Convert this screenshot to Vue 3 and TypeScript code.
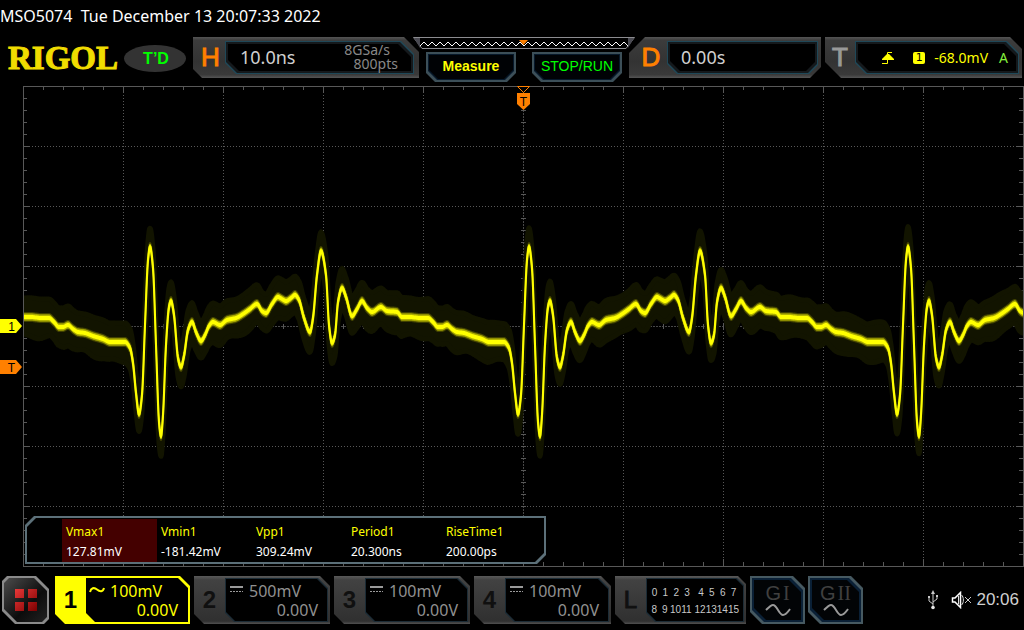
<script setup lang="ts">
interface Measurement {
  label: string
  value: string
}

const measurements: Measurement[] = [
  { label: 'Vmax1', value: '127.81mV' },
  { label: 'Vmin1', value: '-181.42mV' },
  { label: 'Vpp1', value: '309.24mV' },
  { label: 'Period1', value: '20.300ns' },
  { label: 'RiseTime1', value: '200.00ps' },
]

const channels = [
  { id: 1, scale: '100mV', offset: '0.00V', active: true },
  { id: 2, scale: '500mV', offset: '0.00V', active: false },
  { id: 3, scale: '100mV', offset: '0.00V', active: false },
  { id: 4, scale: '100mV', offset: '0.00V', active: false },
]

const digitalRows = [
  [0, 1, 2, 3, 4, 5, 6, 7],
  [8, 9, 10, 11, 12, 13, 14, 15],
]

const generators = ['I', 'II']

// Plot geometry: 10 x 8 divisions
const left = 23
const right = 1023
const top = 86
const bottom = 566
const midX = 523
const midY = 326

const verticals = [123, 223, 323, 423, 623, 723, 823, 923]
const horizontals = [146, 206, 266, 386, 446, 506]

function buildTicks(): string {
  let d = ''
  for (let x = left + 20; x < right; x += 20) {
    const len = (x - left) % 100 === 0 ? 7 : 4
    d += `M${x + 0.5} ${top}v${len}M${x + 0.5} ${bottom}v${-len}M${x + 0.5} ${midY - 2}v5`
  }
  for (let y = top + 12; y < bottom; y += 12) {
    const len = (y - top) % 60 === 0 ? 7 : 4
    d += `M${left} ${y + 0.5}h${len}M${right} ${y + 0.5}h${-len}M${midX - 2} ${y + 0.5}h5`
  }
  return d
}
const ticks = buildTicks()

// One period of the signal, repeated across the screen
const period = 379
const shape: [number, number][] = [
  [23, 317], [31, 317], [41, 318], [49, 318], [54, 322], [59, 327], [63, 327], [68, 325],
  [73, 329], [78, 332], [85, 333], [93, 336], [103, 339], [110, 342], [118, 342], [125, 342],
  [130, 348], [133, 363], [136, 393], [139, 414], [142, 395], [145, 325], [148, 260], [150, 247],
  [153, 268], [156, 345], [159, 422], [161, 436], [163, 415], [166, 345], [169, 307], [171, 301],
  [174, 315], [178, 358], [181, 367], [184, 356], [188, 330], [192, 322], [196, 332], [201, 341],
  [205, 335], [209, 326], [213, 322], [220, 325], [227, 320], [236, 318], [243, 314], [250, 309],
  [257, 304], [262, 311], [266, 313], [272, 304], [278, 297], [282, 299], [286, 301], [291, 298],
  [295, 295], [299, 300], [304, 318], [310, 332], [313, 318], [317, 275], [321, 251], [326, 275],
  [329, 325], [332, 343], [335, 335], [338, 302], [342, 288], [346, 297], [352, 316], [357, 309],
  [362, 301], [367, 308], [372, 312], [381, 307], [387, 311], [397, 312],
]

const points: [number, number][] = []
for (let k = -1; k < 3; k++) {
  for (const [x, y] of shape) points.push([x + k * period, y])
}

// Monotone cubic interpolation keeps each crest and trough where it is given
const slopes = points.map((p, i) => {
  const a = points[i - 1]
  const b = points[i + 1]
  if (!a || !b) return 0
  const s0 = (p[1] - a[1]) / (p[0] - a[0])
  const s1 = (b[1] - p[1]) / (b[0] - p[0])
  return s0 * s1 <= 0 ? 0 : (2 * s0 * s1) / (s0 + s1)
})

const samples: [number, number][] = []
let seg = 0
for (let x = left; x <= right; x += 0.5) {
  while (seg < points.length - 2 && points[seg + 1][0] < x) seg++
  const [x0, y0] = points[seg]
  const [x1, y1] = points[seg + 1]
  const h = x1 - x0
  const t = (x - x0) / h
  const t2 = t * t
  const t3 = t2 * t
  const y =
    (2 * t3 - 3 * t2 + 1) * y0 +
    (t3 - 2 * t2 + t) * h * slopes[seg] +
    (3 * t2 - 2 * t3) * y1 +
    (t3 - t2) * h * slopes[seg + 1]
  samples.push([x, y])
}

function band(spread: number, noise: number): string {
  const edge = (sign: number) =>
    samples.map(([x, y]) => {
      const n = noise * (Math.sin(Math.floor(x / 2) * 12.9898 * sign) + Math.sin(x * 0.21))
      return `${x} ${(y + sign * (spread + n)).toFixed(1)}`
    })
  return `M${edge(-1).join('L')}L${edge(1).reverse().join('L')}Z`
}

const halo = band(19, 1)
const glow = band(4, 0)
const body = band(3, 0)
const core = band(1, 0)

let zig = 'M0 9'
for (let x = 0; x < 208; x += 8) zig += `L${x + 4} 5L${x + 8} 9`
</script>

<template>
  <main class="scope">
    <p class="title">MSO5074&nbsp; Tue December 13 20:07:33 2022</p>

    <header class="top">
      <div class="brand">
        <span class="logo">RIGOL</span>
        <span class="status">T’D</span>
      </div>

      <section class="panel horizontal cut">
        <span class="letter orange">H</span>
        <div class="well cut">
          <span class="big">10.0ns</span>
          <span class="rate"><span class="rate-a">8GSa/s</span><span>800pts</span></span>
        </div>
      </section>

      <div class="middle">
        <svg class="memory" viewBox="0 0 222 12" preserveAspectRatio="none" aria-hidden="true">
          <path d="M.5 .5H221.5L213 11.500H9Z" fill="#000" stroke="#8c8c90" />
          <path d="M1 1H7V11Z" fill="#4a4a52" />
          <path d="M221 1H215V11Z" fill="#4a4a52" />
          <path :d="zig" transform="translate(7 0)" fill="none" stroke="#fff" />
          <path d="M106 3H115L110.500 8Z" fill="#ff8000" />
        </svg>
        <div class="keys">
          <button type="button" class="key cut measure">Measure</button>
          <button type="button" class="key cut run">STOP/RUN</button>
        </div>
      </div>

      <section class="panel delay cut">
        <span class="letter orange">D</span>
        <div class="well cut"><span class="big">0.00s</span></div>
      </section>

      <section class="panel trigger cut">
        <span class="letter grey">T</span>
        <div class="well cut">
          <svg class="edge" width="12" height="14" viewBox="0 0 12 14" aria-hidden="true">
            <path d="M0 12.500H5.500V1.500H10" fill="none" stroke="#ff0" />
            <path d="M5 3H7L12 8V9H0V8Z" fill="#ff0" />
          </svg>
          <span class="source">1</span>
          <span class="level">-68.0mV</span>
          <span class="mode">A</span>
        </div>
      </section>
    </header>

    <section class="plot">
      <svg class="graph" viewBox="0 84 1024 486" role="img" aria-label="Waveform">
        <g fill="none" stroke="#585858" stroke-width="1">
          <rect x="23.500" y="86.500" width="1000" height="480" />
          <g stroke-dasharray="1 2">
            <path v-for="x in verticals" :key="'v' + x" :d="`M${x + 0.5} ${top}V${bottom}`" />
            <path v-for="y in horizontals" :key="'h' + y" :d="`M${left} ${y + 0.5}H${right}`" />
          </g>
          <g stroke-dasharray="2 1" stroke="#484848">
            <path :d="`M${midX + 0.5} ${top}V${bottom}`" />
            <path :d="`M${left} ${midY + 0.5}H${right}`" />
          </g>
          <path :d="ticks" />
        </g>

        <clipPath id="screen"><rect x="24" y="87" width="999" height="479" /></clipPath>
        <g clip-path="url(#screen)" stroke-linejoin="round">
          <path :d="halo" fill="#121400" stroke="#121400" stroke-width="5" />
          <path :d="glow" fill="#6e6e00" stroke="#6e6e00" stroke-width="2" stroke-opacity=".5" />
          <path :d="body" fill="#b4b400" stroke="#b4b400" stroke-width="1" />
          <path :d="core" fill="#ff0" stroke="#ff0" stroke-width="2" />
        </g>

        <path d="M517.500 86.500H529.500L523.500 92.500Z" fill="#000" stroke="#ff8000" />
        <path d="M517 93H530V104L523.500 110L517 104Z" fill="#ff8000" />
        <path d="M0 319H16L22 326L16 333H0Z" fill="#ff0" />
        <path d="M0 360H16L22 367L16 374H0Z" fill="#ff8000" />
        <g class="tag" text-anchor="middle">
          <text x="523.500" y="106">T</text>
          <text x="11.500" y="331">1</text>
          <text x="11.500" y="372">T</text>
        </g>
      </svg>

      <div class="results cut">
        <table>
          <thead>
            <tr>
              <th v-for="m in measurements" :key="m.label" scope="col">{{ m.label }}</th>
            </tr>
          </thead>
          <tbody>
            <tr>
              <td v-for="m in measurements" :key="m.label">{{ m.value }}</td>
            </tr>
          </tbody>
        </table>
      </div>
    </section>

    <footer class="bottom">
      <button type="button" class="menu cut" aria-label="Menu">
        <svg width="24" height="24" viewBox="0 0 24 24" aria-hidden="true">
          <defs>
            <linearGradient id="red" x1="0" y1="0" x2="1" y2="1">
              <stop offset="0" stop-color="#e83838" />
              <stop offset="1" stop-color="#7c0000" />
            </linearGradient>
          </defs>
          <path d="M1 1H10V10H1ZM14 1H23V10H14ZM1 14H10V23H1ZM14 14H23V23H14Z" fill="url(#red)" />
        </svg>
      </button>

      <button
        v-for="c in channels"
        :key="c.id"
        type="button"
        class="channel cut"
        :class="{ active: c.active }"
      >
        <span class="number">{{ c.id }}</span>
        <span class="inset cut">
          <span class="scale">
            <svg v-if="c.active" width="16" height="16" viewBox="0 0 16 16" aria-hidden="true">
              <path
                d="M1 8C2 4 5 3 8 5.500S14 8 15 4"
                fill="none"
                stroke="#ff0"
                stroke-width="2"
              />
            </svg>
            <svg v-else width="16" height="16" viewBox="0 0 16 16" aria-hidden="true">
              <path d="M2 3H15" stroke="#9a9a9a" stroke-width="2" />
              <path d="M2 7.500H15" stroke="#9a9a9a" stroke-dasharray="2 1" />
            </svg>
            <span>{{ c.scale }}</span>
          </span>
          <span class="offset">{{ c.offset }}</span>
        </span>
      </button>

      <button type="button" class="channel digital cut">
        <span class="number thin">L</span>
        <span class="inset cut">
          <span v-for="(row, i) in digitalRows" :key="i" class="bits">
            <span v-for="n in row" :key="n">{{ n }}</span>
          </span>
        </span>
      </button>

      <button v-for="g in generators" :key="g" type="button" class="gen cut">
        <span class="gen-name">G<span class="roman">{{ g }}</span></span>
        <svg width="26" height="14" viewBox="0 0 26 14" aria-hidden="true">
          <path
            d="M1 7C4 4 6 2 8 2C12 2 14 12 18 12C21 12 22 10 25 6"
            fill="none"
            stroke="#999"
            stroke-width="2"
          />
        </svg>
      </button>

      <div class="tray">
        <svg width="12" height="20" viewBox="0 0 12 20" aria-label="USB" role="img">
          <path d="M6 2V17M6 14L2 11V7M6 12L10 9V6" fill="none" stroke="#c8c8c8" />
          <path d="M6 0L8 4H4Z" fill="#c8c8c8" />
          <rect x="1" y="6" width="2" height="2" fill="#c8c8c8" />
          <rect x="9" y="5" width="2" height="2" fill="#c8c8c8" />
          <circle cx="6" cy="17.500" r="1.800" fill="#e8e8e8" />
        </svg>
        <svg width="21" height="18" viewBox="0 0 21 18" aria-label="Muted" role="img">
          <path
            d="M1.500 7V11H4L9.500 16.500V1.500L4 7Z"
            fill="none"
            stroke="#fff"
            stroke-width="1.500"
          />
          <path d="M7.500 5V13M10.500 4C13 6 13 12 10.500 14" fill="none" stroke="#ddd" />
          <path d="M14 6L20 12M20 6L14 12" fill="none" stroke="#ccc" />
        </svg>
        <time>20:06</time>
      </div>
    </footer>
  </main>
</template>

<style>
body {
  background: #000;
}
</style>

<style scoped>
.scope {
  display: flex;
  flex-direction: column;
  background: #000;
  color: #d0d0d0;
  font-family: 'Noto Sans', 'Open Sans', sans-serif;
  overflow: hidden;
}

.scope button {
  border: 0;
  padding: 0;
  font: inherit;
  color: inherit;
  cursor: pointer;
}

/* Rectangle with any of its four corners cut off */
.cut,
.well::before,
.well::after,
.key::before,
.key::after,
.gen::before,
.gen::after,
.menu::before,
.results::before,
.inset::before {
  clip-path: polygon(
    var(--tl) 0,
    calc(100% - var(--tr)) 0,
    100% var(--tr),
    100% calc(100% - var(--br)),
    calc(100% - var(--br)) 100%,
    var(--bl) 100%,
    0 calc(100% - var(--bl)),
    0 var(--tl)
  );
}

.cut {
  --tl: 0px;
  --tr: 0px;
  --br: 0px;
  --bl: 0px;
  position: relative;
  isolation: isolate;
}

.well::before,
.well::after,
.key::before,
.key::after,
.gen::before,
.gen::after,
.menu::before,
.results::before,
.inset::before {
  content: '';
  position: absolute;
  inset: 1px;
  z-index: -1;
}

.title {
  margin: 0;
  height: 37px;
  line-height: 32px;
  font-size: 16px;
  color: #fff;
  white-space: nowrap;
}

.top {
  display: grid;
  grid-template-columns: 193fr 220fr 216fr 194fr 201fr;
  height: 47px;
}

.brand {
  display: flex;
  align-items: center;
  justify-content: space-between;
  height: 42px;
  padding: 0 7px 0 8px;
}

.logo {
  font: bold 33px/42px 'Liberation Serif', serif;
  color: #f0dc00;
  -webkit-text-stroke: 1px #f0dc00;
}

.status {
  width: 60px;
  padding-left: 2px;
  border-radius: 50%;
  background: #333;
  color: #0f0;
  font: bold 16px/27px 'Liberation Sans', sans-serif;
  text-align: center;
}

.panel {
  display: grid;
  height: 41px;
  box-sizing: border-box;
  background: linear-gradient(#555 0, #3c3c3c 8%, #333 60%, #3a3a3a 92%, #555);
}

.horizontal {
  --tr: 15px;
  --bl: 9px;
  grid-template-columns: 32px 1fr;
  margin-right: -6px;
  padding: 4px 5px 4px 0;
}

.delay {
  --tl: 16px;
  --br: 11px;
  grid-template-columns: 38px 1fr;
  margin-right: 2px;
  padding: 4px 3px 4px 0;
}

.trigger {
  --tr: 12px;
  --bl: 16px;
  grid-template-columns: 30px 1fr;
  margin: 0 2px;
  padding: 4px 3px 4px 0;
}

.letter {
  font: 26px/33px 'Liberation Sans', sans-serif;
  text-align: center;
}

.orange {
  color: #ff8000;
  -webkit-text-stroke: 1px #ff8000;
}

.horizontal .letter {
  padding-left: 3px;
}

.delay .letter {
  padding-left: 6px;
}

.grey {
  color: #999;
  -webkit-text-stroke: 1px #999;
}

.well {
  display: flex;
  align-items: center;
  background: #1f4858;
}

.well::before {
  background: #15191c;
}

.well::after {
  inset: 3px;
  background: #000;
}

.horizontal .well {
  --tr: 13px;
  --bl: 11px;
  justify-content: space-between;
  padding: 0 16px 0 15px;
}

.delay .well {
  --br: 9px;
  --bl: 10px;
  padding: 0 14px;
}

.trigger .well {
  --tr: 12px;
  --bl: 11px;
  justify-content: flex-end;
  padding-right: 11px;
  font-size: 14px;
}

.big {
  font-size: 18px;
  line-height: 33px;
}

.rate {
  display: flex;
  flex-direction: column;
  align-items: flex-end;
  padding-bottom: 2px;
  font-size: 14px;
  line-height: 14px;
  color: #888;
}

.rate-a {
  padding-right: 8px;
}

.edge {
  margin-right: 19px;
}

.source {
  width: 12px;
  border-radius: 2px;
  margin-right: 9px;
  background: #ff0;
  color: #000;
  font: 11px/12px 'DejaVu Sans', sans-serif;
  text-align: center;
}

.level {
  margin-right: 11px;
  color: #ff0;
}

.mode {
  color: #84f03c;
}

.middle {
  display: flex;
  flex-direction: column;
  margin-right: -6px;
}

.memory {
  display: block;
  width: 100%;
  height: 12px;
}

.keys {
  display: flex;
  gap: 16px;
  padding: 3px 13px 0;
}

.scope .key {
  --br: 9px;
  --bl: 9px;
  flex: 1;
  height: 30px;
  padding-bottom: 2px;
  background: #3c4f58;
  font: 14px/28px 'Liberation Sans', sans-serif;
}

.key::before {
  inset: 2px;
  background: #06182a;
}

.key::after {
  inset: 3px;
  background: #000205;
}

.scope .measure {
  color: #ff0;
  font-weight: bold;
}

.scope .run {
  color: #0f0;
}

.plot {
  position: relative;
}

.graph {
  display: block;
  width: 100%;
  height: auto;
}

.tag {
  font: 12px 'Liberation Sans', sans-serif;
  fill: #000;
}

.results {
  --tl: 9px;
  --br: 9px;
  position: absolute;
  left: 25px;
  bottom: 6px;
  padding: 3px 9px 2px 37px;
  background: #5c7079;
}

.results::before {
  inset: 2px;
  background: #000;
}

table {
  border-collapse: collapse;
  font-size: 12px;
}

th,
td {
  width: 91px;
  padding: 0 0 0 4px;
  text-align: left;
  font-weight: normal;
  line-height: 21px;
  white-space: nowrap;
}

th {
  color: #ff0;
  padding-top: 2px;
}

td {
  color: #fff;
  line-height: 20px;
}

th:first-child,
td:first-child {
  background: #440000;
}

.bottom {
  display: grid;
  grid-template-columns: 53fr 139fr 140fr 140fr 141fr 135fr 58fr 58fr 158fr;
  margin-top: 6px;
  padding-left: 2px;
  height: 48px;
}

.scope .menu {
  --tl: 5px;
  --tr: 13px;
  --br: 5px;
  --bl: 13px;
  display: grid;
  place-items: center;
  margin-right: 6px;
  background: #8a8a8a;
}

.menu::before {
  inset: 2px;
  background: linear-gradient(135deg, #4c4c4c, #0c0c0c 60%, #222);
}

.scope .channel {
  --tr: 10px;
  --bl: 10px;
  display: grid;
  grid-template-columns: 31px 1fr;
  margin-right: 4px;
  padding: 2px 2px 2px 0;
  background: linear-gradient(#5a5a5a 0, #424242 8%, #303030 94%, #505050);
  color: #909090;
  font-size: 16px;
}

.scope .channel.active {
  background: #ff0;
  color: #ff0;
}

.number {
  align-self: center;
  color: #101010;
  font: bold 24px/40px 'Liberation Sans', sans-serif;
  text-align: center;
}

.active .number {
  color: #000;
}

.thin {
  font-weight: normal;
  -webkit-text-stroke: 1px #101010;
}

.inset {
  --tr: 10px;
  --bl: 9px;
  display: flex;
  flex-direction: column;
  justify-content: center;
  padding-top: 2px;
  background: #1c2c36;
}

.active .inset {
  background: #000;
}

.inset::before {
  background: #000;
}

.scale {
  display: flex;
  align-items: center;
  gap: 5px;
  padding-left: 3px;
  line-height: 19px;
}

.offset {
  padding-right: 10px;
  text-align: right;
  line-height: 19px;
}

.scope .digital {
  --tr: 8px;
}

.digital .inset {
  --tr: 7px;
}

.bits {
  display: grid;
  grid-template-columns: repeat(4, 11fr) 3fr repeat(4, 11fr);
  padding: 0 5px 0 3px;
  color: #c8c8c8;
  font: 10px/17px 'Liberation Sans', sans-serif;
  text-align: center;
}

.bits > :nth-child(5) {
  grid-column: 6;
}

.scope .gen {
  --tr: 12px;
  --bl: 12px;
  display: flex;
  flex-direction: column;
  align-items: center;
  justify-content: center;
  margin-right: 3px;
  background: #465961;
  color: #404040;
  font: 20px/20px 'Liberation Sans', sans-serif;
}

.gen::before {
  inset: 2px;
  background: #0a2036;
}

.gen::after {
  inset: 4px;
  background: #020406;
}

.roman {
  padding-left: 2px;
  font-family: 'Liberation Serif', serif;
}

.tray {
  display: flex;
  align-items: center;
  justify-content: flex-end;
  padding-right: 5px;
}

.tray svg + svg {
  margin: 0 4px 0 12px;
}

time {
  font: 17px/24px 'Liberation Sans', sans-serif;
}
</style>
